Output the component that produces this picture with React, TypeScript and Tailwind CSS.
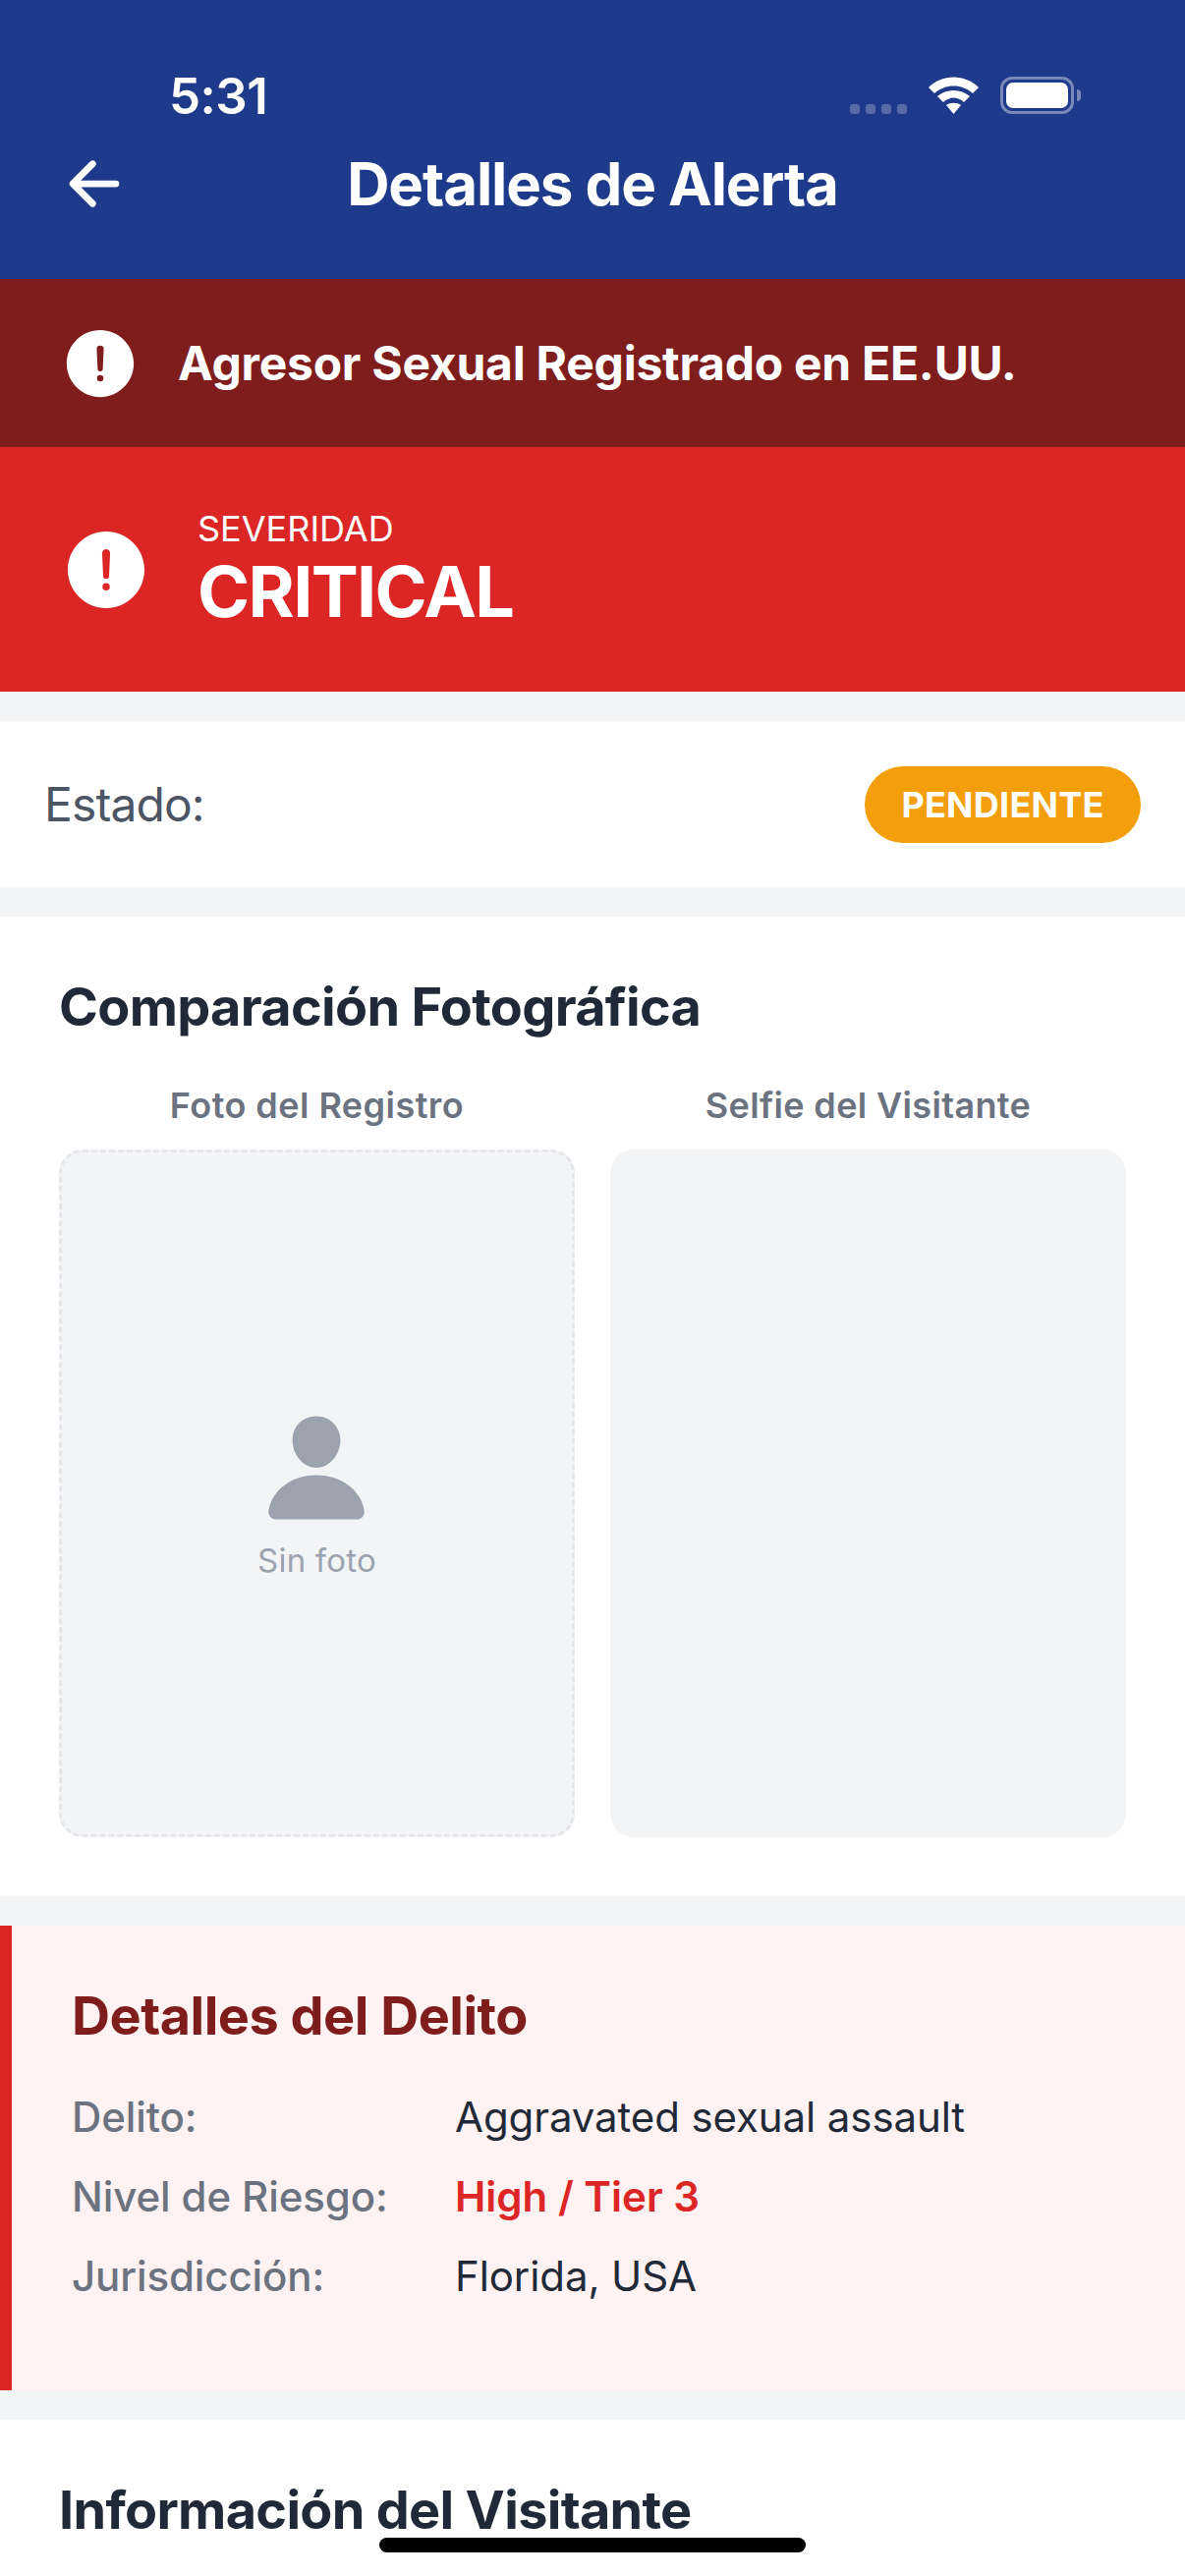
import { IoAlertCircle, IoArrowBack, IoPerson } from 'react-icons/io5';

function DetailRow({ label, value, danger }: { label: string; value: string; danger?: boolean }) {
  return (
    <div className="flex h-[81px] items-center">
      <span className="w-[390px] text-[42px] font-medium tracking-[-0.1px] text-[#6b7280]">{label}</span>
      <span className={danger ? 'text-[42px] font-semibold text-[#dc2626]' : 'text-[42px] tracking-[-0.1px] text-[#1f2937]'}>{value}</span>
    </div>
  );
}

function StatusIcons() {
  return (
    <div className="flex items-start">
      <div className="mt-[28px] flex gap-[6px]">
        {[0, 1, 2, 3].map((i) => (
          <span key={i} className="h-[10px] w-[10px] rounded-[3px] bg-white/25" />
        ))}
      </div>
      <svg className="ml-[22px]" width="51" height="38" viewBox="0 0 51 38" fill="none">
        <path d="M0 11 C14 -3 37 -3 51 11 L45 17 C34 7 17 7 6 17 Z" fill="#fff" />
        <path d="M9 20 C18 12 33 12 42 20 L36 26 C29 20 22 20 15 26 Z" fill="#fff" />
        <path d="M18 29 C22 26 29 26 33 29 L25.5 38 Z" fill="#fff" />
      </svg>
      <div className="ml-[22px] flex items-center">
        <div className="h-[38px] w-[75px] rounded-[12px] border-[3px] border-white/40 p-[3px]">
          <div className="h-full w-full rounded-[7px] bg-white" />
        </div>
        <span className="ml-[3px] h-[12px] w-[4px] rounded-r-full bg-white/40" />
      </div>
    </div>
  );
}

export default function App() {
  return (
    <div className="relative h-[2622px] w-[1206px] overflow-hidden bg-[#f3f4f6] font-['Inter',sans-serif]">
      <header className="h-[284px] bg-[#1e3a8a] text-white">
        <div className="flex h-[151px] items-start justify-between pl-[172px] pr-[106px] pt-[78px]">
          <span className="text-[51px] leading-[40px] font-semibold tracking-[-0.5px]">5:31</span>
          <StatusIcons />
        </div>
        <div className="relative flex h-[72px] items-center justify-center">
          <IoArrowBack size={72} className="absolute left-[60px] top-0" />
          <h1 className="text-[60px] font-bold tracking-[-1.1px]">Detalles de Alerta</h1>
        </div>
      </header>

      <div className="flex h-[171px] items-center bg-[#7f1d1d] pl-[60px] text-white">
        <IoAlertCircle size={84} className="shrink-0" />
        <span className="ml-[37px] text-[48px] font-bold tracking-[-0.25px]">Agresor Sexual Registrado en EE.UU.</span>
      </div>

      <div className="flex h-[249px] items-center bg-[#dc2626] pl-[60px] text-white">
        <IoAlertCircle size={96} className="shrink-0" />
        <div className="ml-[45px]">
          <div className="mb-[3px] text-[36px] leading-[42px]">SEVERIDAD</div>
          <div className="text-[72px] leading-[80px] font-bold tracking-[-1.7px]">CRITICAL</div>
        </div>
      </div>

      <div className="mt-[30px] flex h-[169px] items-center justify-between bg-white pl-[45px] pr-[45px]">
        <span className="text-[48px] tracking-[-0.9px] text-[#4b5563]">Estado:</span>
        <span className="flex h-[78px] w-[281px] items-center justify-center rounded-full bg-[#f59e0b] text-[36px] font-bold tracking-[0.25px] text-white">
          PENDIENTE
        </span>
      </div>

      <section className="mt-[30px] h-[997px] bg-white px-[60px] pt-[60px]">
        <h2 className="text-[54px] leading-[64px] font-bold tracking-[-0.7px] text-[#1f2937]">Comparación Fotográfica</h2>
        <div className="mt-[46px] grid grid-cols-2 gap-[36px]">
          <div>
            <div className="mb-[23px] text-center text-[36px] leading-[44px] font-semibold tracking-[0.45px] text-[#6b7280]">Foto del Registro</div>
            <div className="flex h-[700px] flex-col items-center justify-center rounded-[24px] border-[3px] border-dashed border-[#e5e7eb] bg-[#f3f4f6] pt-[8px]">
              <IoPerson size={120} className="-ml-[2px] text-[#9ca3af]" />
              <span className="mt-[10px] text-[33px] tracking-[0.2px] text-[#9ca3af]">Sin foto</span>
            </div>
          </div>
          <div>
            <div className="mb-[23px] text-center text-[36px] leading-[44px] font-semibold tracking-[0.35px] text-[#6b7280]">Selfie del Visitante</div>
            <div className="h-[700px] rounded-[24px] bg-[#f3f4f6]" />
          </div>
        </div>
      </section>

      <section className="mt-[30px] h-[473px] border-l-[12px] border-[#dc2626] bg-[#fef2f2] pl-[61px] pt-[60px]">
        <h2 className="mb-[30px] text-[54px] leading-[64px] font-bold tracking-[-0.5px] text-[#7f1d1d]">Detalles del Delito</h2>
        <DetailRow label="Delito:" value="Aggravated sexual assault" />
        <DetailRow label="Nivel de Riesgo:" value="High / Tier 3" danger />
        <DetailRow label="Jurisdicción:" value="Florida, USA" />
      </section>

      <section className="mt-[30px] h-[200px] bg-white px-[60px] pt-[60px]">
        <h2 className="text-[54px] leading-[64px] font-bold tracking-[-0.7px] text-[#1f2937]">Información del Visitante</h2>
      </section>

      <div className="absolute bottom-[24px] left-[386px] h-[15px] w-[434px] rounded-full bg-black" />
    </div>
  );
}
